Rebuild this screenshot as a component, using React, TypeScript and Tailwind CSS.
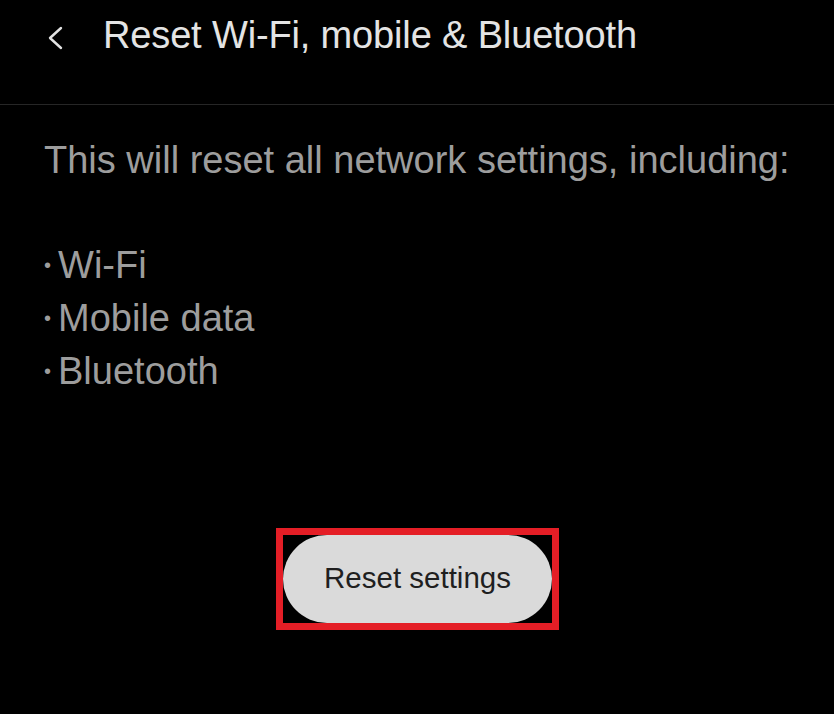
import React from "react";

export default function App() {
  return (
    <div className="w-[834px] h-[714px] bg-black overflow-hidden" style={{ fontFamily: '"Liberation Sans", Arial, sans-serif' }}>
      <div className="h-[105px] border-b border-[#262626] flex items-start pt-[11px]">
        <div className="w-[103px] pl-[46px] pt-[15px]">
          <svg width="18" height="24" viewBox="0 0 18 24" fill="none">
            <path d="M15 2 L4 12 L15 22" stroke="#e2e2e2" strokeWidth="2.4" strokeLinecap="round" strokeLinejoin="round" />
          </svg>
        </div>
        <div className="text-[38px] leading-[48px] text-[#e4e4e4] tracking-[-0.15px]">Reset Wi-Fi, mobile &amp; Bluetooth</div>
      </div>
      <div className="pl-[44px] pt-[30px] text-[#9d9d9d]">
        <div className="text-[38px] leading-[50px]">This will reset all network settings, including:</div>
        <div className="mt-[54px] flex flex-col text-[38px] leading-[53px]">
          <div className="flex items-center"><span className="text-[20px] mr-[7px]">•</span>Wi-Fi</div>
          <div className="flex items-center"><span className="text-[20px] mr-[7px]">•</span>Mobile data</div>
          <div className="flex items-center"><span className="text-[20px] mr-[7px]">•</span>Bluetooth</div>
        </div>
      </div>
      <div className="flex justify-center pt-[130px]">
        <div className="border-[7px] border-[#e41e26] w-[283px] h-[102px] ml-[1px] flex">
          <button className="w-full h-full rounded-full bg-[#dadada] text-[#1f1f1f] text-[29.5px] pb-[2px]">Reset settings</button>
        </div>
      </div>
    </div>
  );
}
